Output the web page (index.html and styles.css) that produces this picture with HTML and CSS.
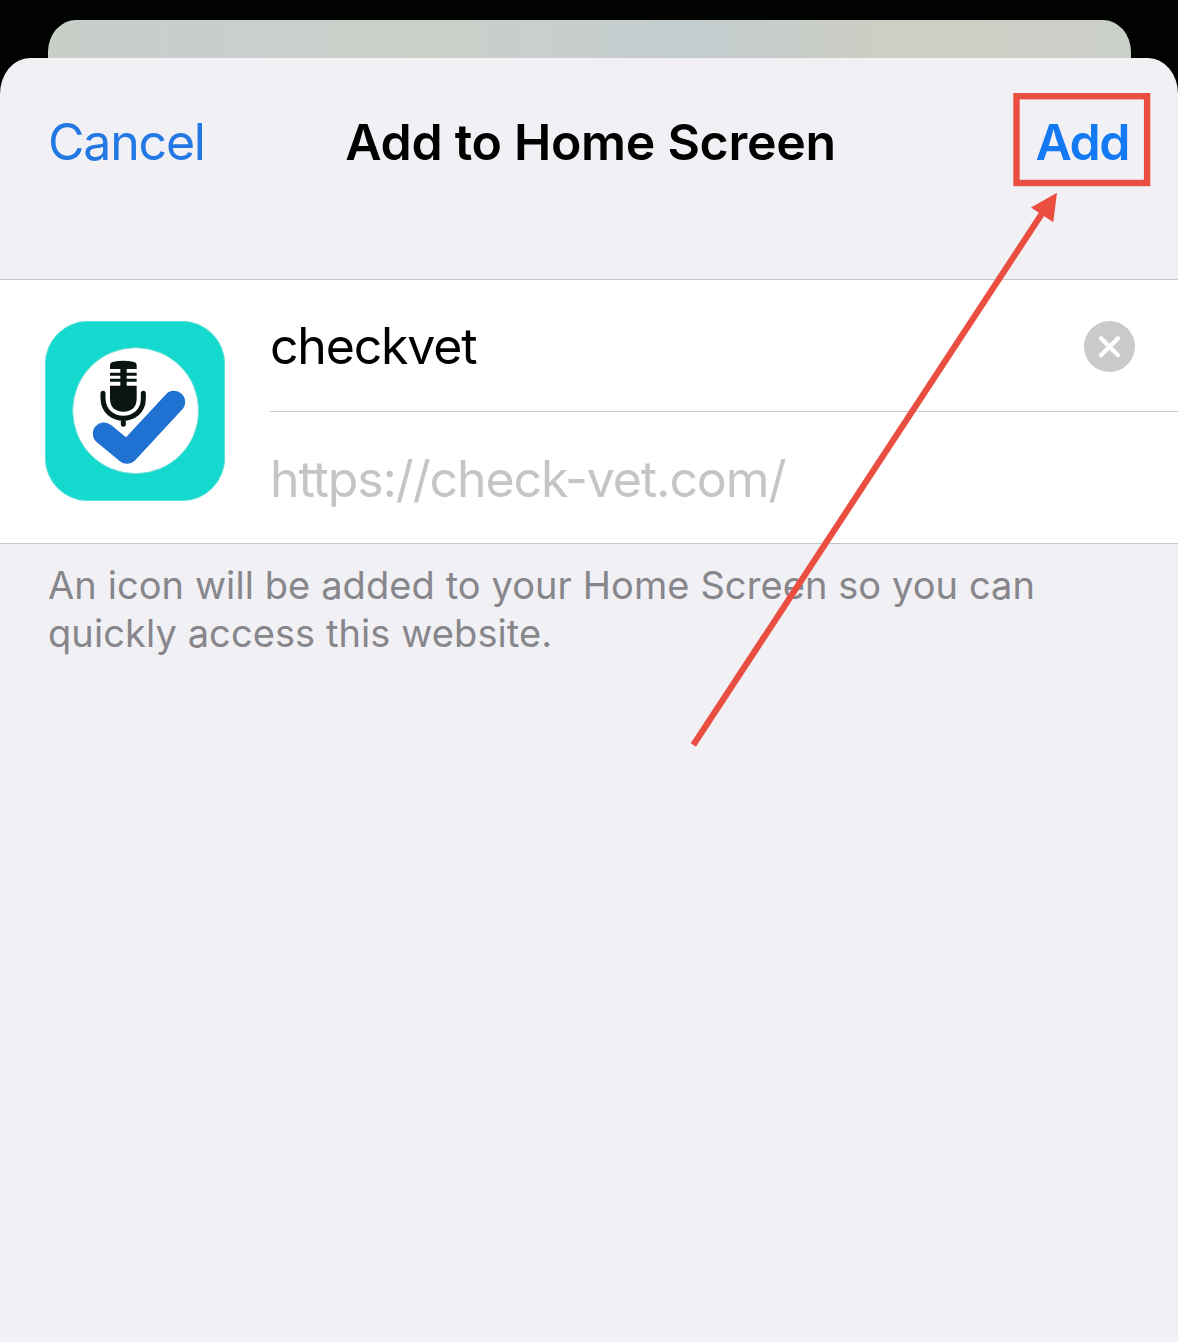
FILE: index.html
```html
<!DOCTYPE html>
<html lang="en">
<head>
<meta charset="utf-8">
<title>Add to Home Screen</title>
<link rel="stylesheet" href="styles.css">
</head>
<body>
<div class="screen">
  <div class="backdrop"></div>
  <main class="sheet">
    <header class="bar">
      <a class="cancel">Cancel</a>
      <h1 class="title">Add to Home Screen</h1>
      <a class="add">Add</a>
    </header>
    <section class="card">
      <svg class="app-icon" viewBox="30 33 540 540">
        <rect x="31" y="34" width="538" height="538" rx="128" fill="#13d9ce" stroke="#58dfd8" stroke-width="3"/>
        <circle cx="302" cy="302" r="189" fill="#fff" stroke="#6fdcd6" stroke-width="3"/>
        <path d="M207 371 L276 428 L417 276" fill="none" stroke="#1f72d2" stroke-width="67" stroke-linecap="round" stroke-linejoin="round"/>
        <g fill="#0a1413">
          <path d="M225 177 V165 Q225 158 233 156 Q265 149 297 156 Q305 158 305 165 V177 H275 V188 H305 V197 H275 V206 H305 V215 H275 V227 H305 V268 Q303 305 265 305 Q227 305 225 268 V227 H256 V215 H225 V206 H256 V197 H225 V188 H256 V177 Z"/>
          <path d="M204 250 V266 C206 344 324 344 325 266 V250 M265 326 V343" fill="none" stroke="#0a1413" stroke-width="15" stroke-linecap="round"/>
        </g>
      </svg>
      <div class="fields">
        <div class="field name">
          <span>checkvet</span>
          <svg class="clear" viewBox="0 0 51 51">
            <circle cx="25.5" cy="25.5" r="25.5" fill="#cacaca"/>
            <path d="M17 17.3 L34 34.3 M34 17.3 L17 34.3" stroke="#fff" stroke-width="4.2" stroke-linecap="round"/>
          </svg>
        </div>
        <div class="field url">https://check-vet.com/</div>
      </div>
    </section>
    <p class="note">An icon will be added to your Home Screen so you can<br>quickly access this website.</p>
  </main>
  <svg class="callout" viewBox="0 0 1178 1342">
    <rect x="1016.5" y="96.2" width="130.6" height="86.8" fill="none" stroke="#ea4e40" stroke-width="6.4"/>
    <path d="M693.3 745 L1043 212" stroke="#ea4e40" stroke-width="6.2"/>
    <path d="M1057 192.8 L1031 207.5 L1053.3 222.3 Z" fill="#ea4e40"/>
  </svg>
</div>
</body>
</html>
```
FILE: styles.css
```css
* { box-sizing: border-box; }
body { margin: 0; background: #000300; font-family: Inter, "Liberation Sans", sans-serif; }
.screen { position: relative; width: 1178px; height: 1342px; overflow: hidden; display: flex; flex-direction: column; }
.backdrop {
  height: 38px; margin: 20px 47px 0 48px; border-radius: 28px 28px 0 0 / 32px 32px 0 0;
  background: linear-gradient(90deg, #cacec9 0%, #c9cecc 14%, #c8d0c8 35%, #c8cecd 48%, #c3cccf 59%, #c9cdc8 70%, #cecec2 80%, #cdcec8 92%, #cacfca 100%);
}
.sheet { flex: 1; background: #f1f0f5; border-radius: 30px 30px 0 0 / 36px 36px 0 0; }
.bar {
  height: 221px; padding: 54px 49px 0 48px; display: grid; grid-template-columns: 1fr auto 1fr;
  align-items: start; font-size: 50px; line-height: 60px; white-space: nowrap;
}
.cancel { color: #2478e4; letter-spacing: -1.2px; }
.title { margin: 0; padding-left: 4px; font-size: 50px; font-weight: 600; letter-spacing: -.3px; color: #000; }
.add { color: #147af3; font-weight: 600; text-align: right; letter-spacing: -1.5px; }
.card {
  height: 265px; background: #fff; border-top: 1px solid #c6c6c9; border-bottom: 1px solid #c6c6c9;
  display: flex; align-items: flex-start; padding-left: 45px; gap: 45px;
}
.app-icon { width: 180px; height: 180px; flex: none; margin-top: 41px; }
.fields { flex: 1; height: 263px; }
.field { height: 131px; display: flex; align-items: center; justify-content: space-between; font-size: 50px; line-height: 60px; letter-spacing: -1.2px; padding: 2px 43px 0 0; }
.name { height: 132px; border-bottom: 1px solid #c6c6c9; color: #000; padding-top: 0; }
.url { color: #c5c5c7; letter-spacing: -1.12px; }
.clear { width: 51px; height: 51px; margin-top: 2px; }
.note { margin: 0; padding: 17px 48px 0; font-size: 38px; line-height: 48px; letter-spacing: .09px; color: #87868b; white-space: nowrap; }
.callout { position: absolute; inset: 0; width: 1178px; height: 1342px; }
```
